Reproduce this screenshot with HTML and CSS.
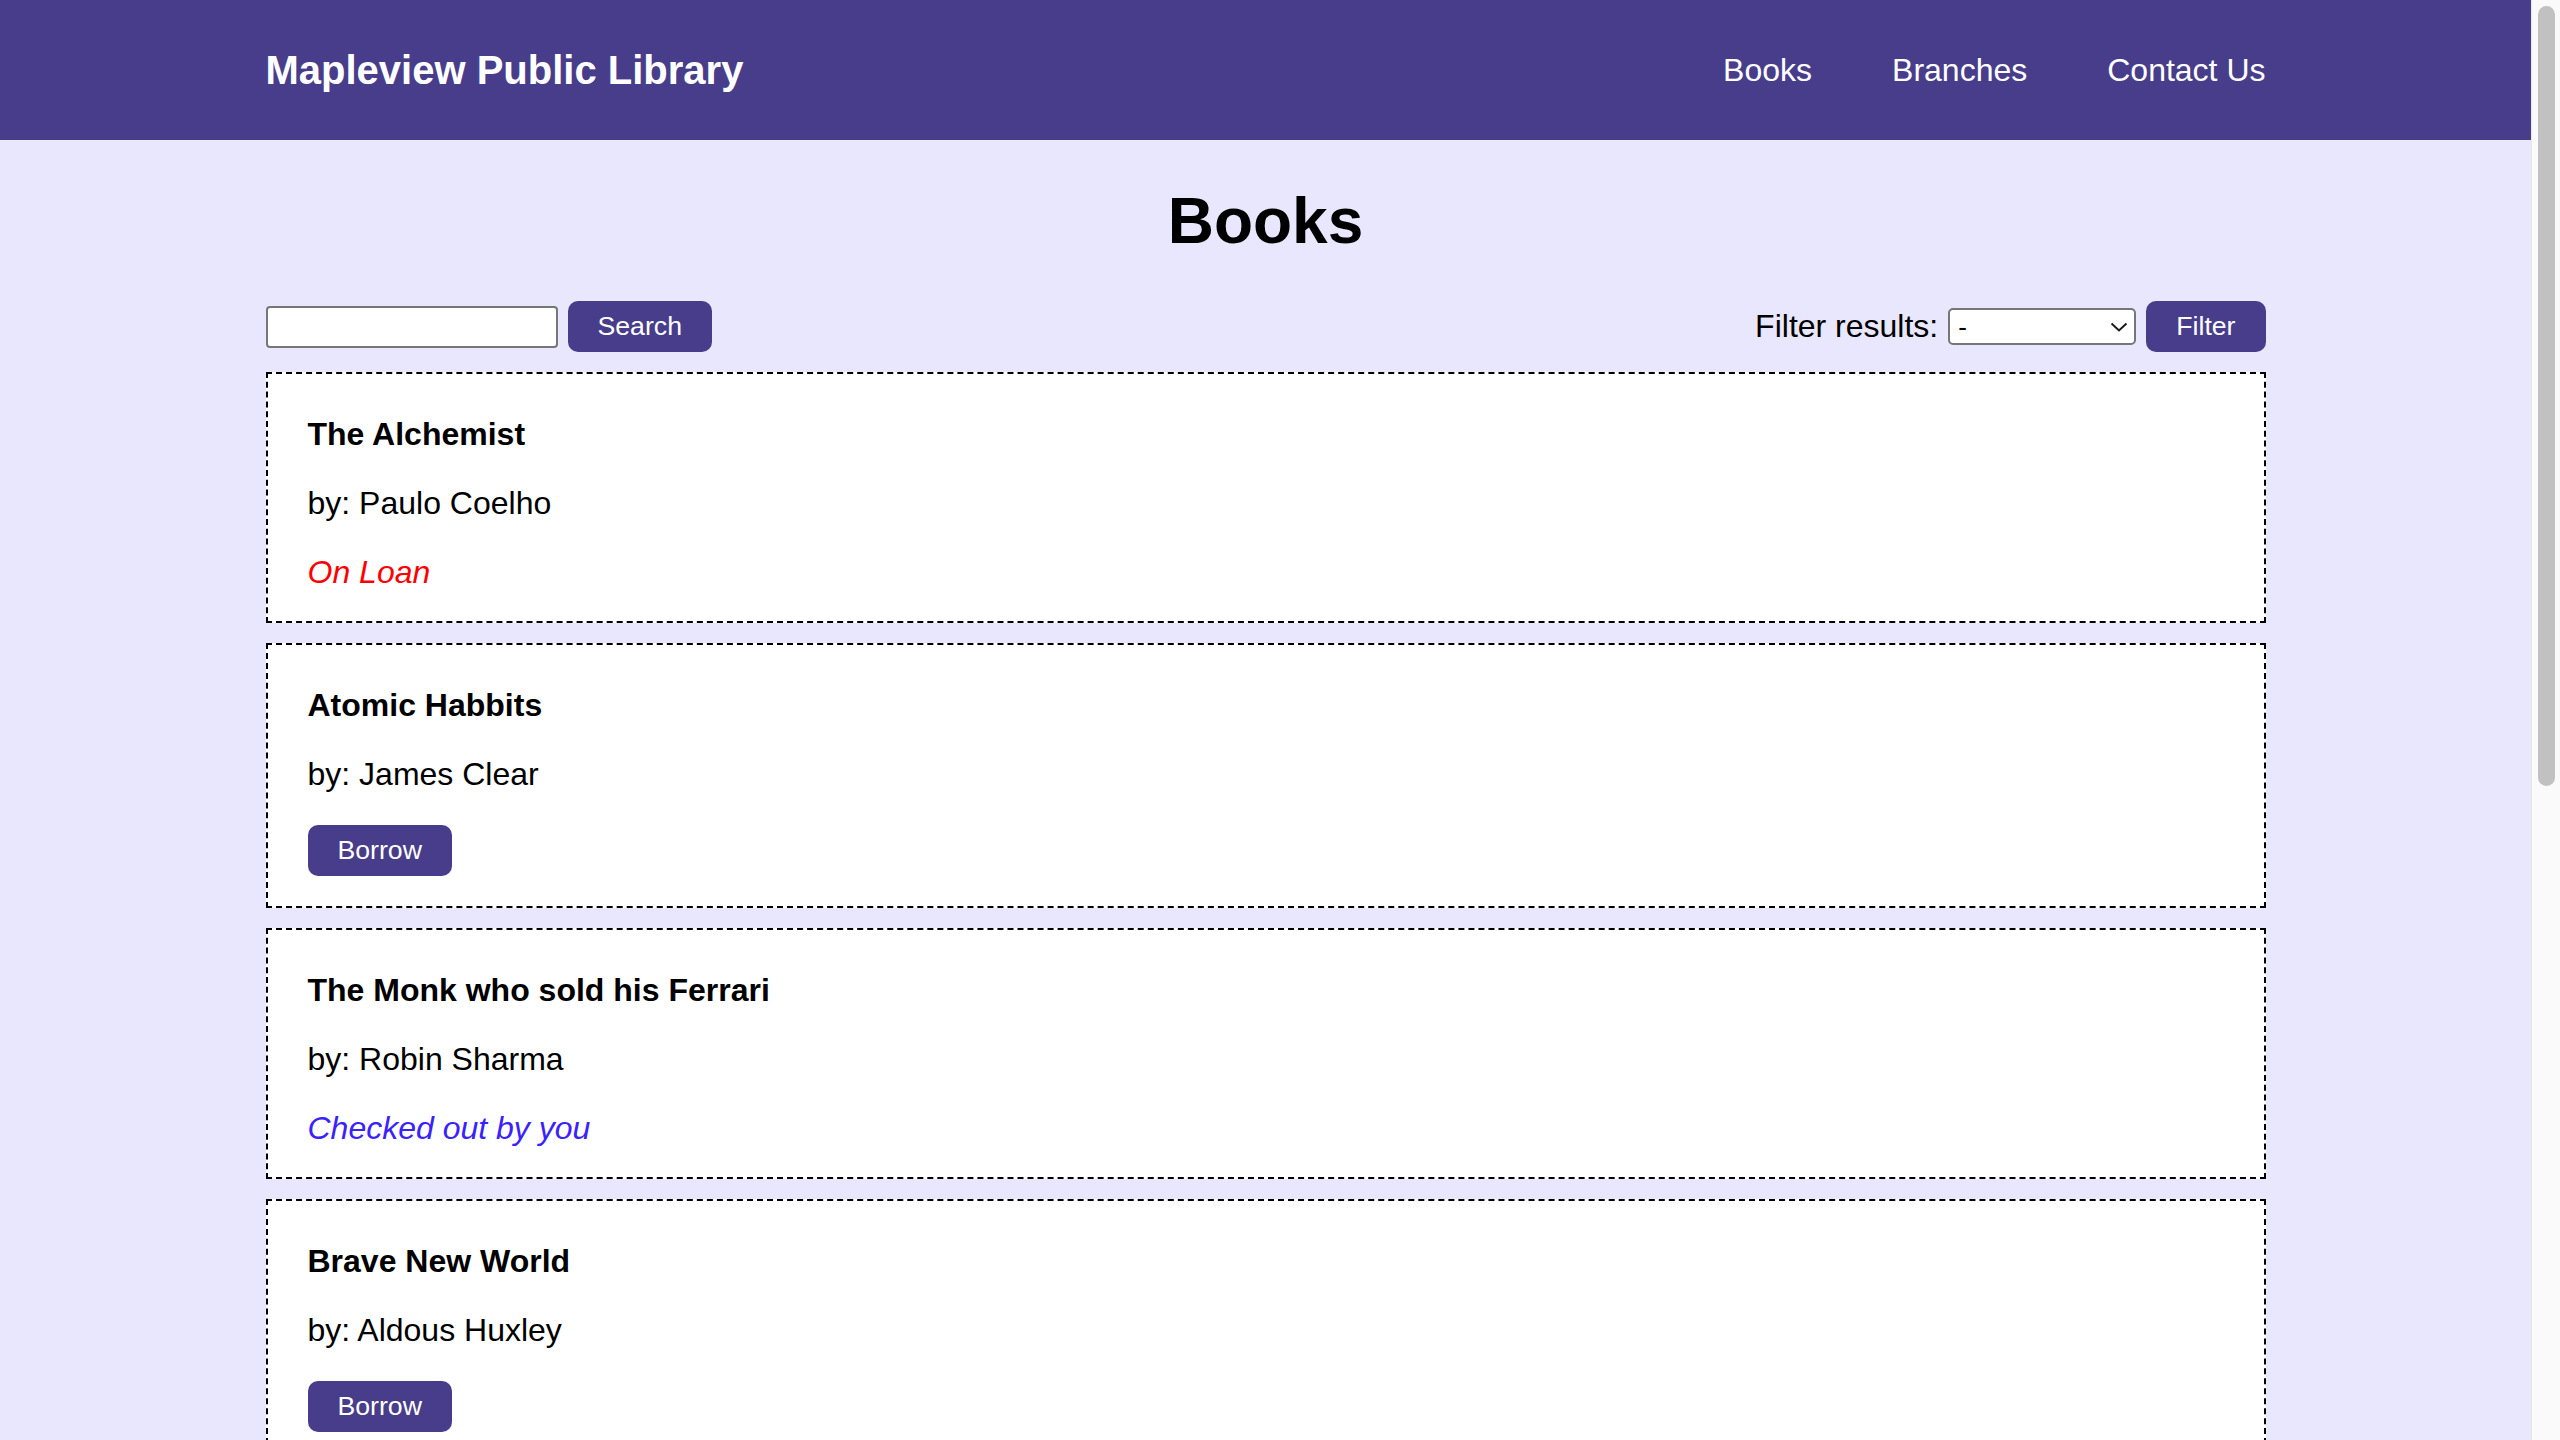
FILE: index.html
```html
<!DOCTYPE html>
<html lang="en">
<head>
<meta charset="utf-8">
<title>Mapleview Public Library – Books</title>
<link rel="stylesheet" href="styles.css">
</head>
<body>
<div class="page">
  <header class="site-header">
    <div class="header-inner">
      <div class="brand">Mapleview Public Library</div>
      <nav class="nav">
        <a href="#" class="nav-link">Books</a>
        <a href="#" class="nav-link">Branches</a>
        <a href="#" class="nav-link">Contact Us</a>
      </nav>
    </div>
  </header>
  <main class="main">
    <h1 class="page-title">Books</h1>
    <div class="toolbar">
      <form class="search-form">
        <input type="text" class="search-input" aria-label="Search">
        <button type="button" class="btn">Search</button>
      </form>
      <form class="filter-form">
        <label class="filter-label" for="filter">Filter results:</label>
        <span class="select-wrap">
          <select id="filter" class="filter-select">
            <option>-</option>
            <option>Available</option>
            <option>On Loan</option>
          </select>
          <svg class="chev" width="18" height="10" viewBox="0 0 18 10"><path d="M1.5 1.5 L9 8.5 L16.5 1.5" fill="none" stroke="#1a1a1a" stroke-width="2"/></svg>
        </span>
        <button type="button" class="btn">Filter</button>
      </form>
    </div>
    <div class="book-list">
      <div class="book">
        <h4 class="book-title">The Alchemist</h4>
        <p class="book-author">by: Paulo Coelho</p>
        <p class="status status-loan">On Loan</p>
      </div>
      <div class="book">
        <h4 class="book-title">Atomic Habbits</h4>
        <p class="book-author">by: James Clear</p>
        <div class="book-action"><button type="button" class="btn">Borrow</button></div>
      </div>
      <div class="book">
        <h4 class="book-title">The Monk who sold his Ferrari</h4>
        <p class="book-author">by: Robin Sharma</p>
        <p class="status status-mine">Checked out by you</p>
      </div>
      <div class="book">
        <h4 class="book-title">Brave New World</h4>
        <p class="book-author">by: Aldous Huxley</p>
        <div class="book-action"><button type="button" class="btn">Borrow</button></div>
      </div>
    </div>
  </main>
</div>
<div class="fake-scrollbar" aria-hidden="true"><div class="fake-thumb"></div></div>
</body>
</html>
```

FILE: styles.css
```css
html {
  background: #e8e7fd;
  scrollbar-width: none;
}
::-webkit-scrollbar {
  width: 0;
  height: 0;
}
body {
  margin: 0;
  background: #e8e7fd;
  font-family: "Liberation Sans", Arial, Helvetica, sans-serif;
  font-size: 32px;
  color: #000;
}
.page {
  margin-right: 29px;
}
.site-header {
  background: #483d8b;
  height: 140px;
  display: flex;
  align-items: center;
}
.header-inner {
  width: 2000px;
  margin: 0 auto;
  display: flex;
  align-items: center;
  justify-content: space-between;
}
.brand {
  color: #fff;
  font-weight: bold;
  font-size: 40px;
}
.nav {
  display: flex;
  gap: 80px;
}
.nav-link {
  color: #fff;
  text-decoration: none;
  font-size: 32px;
}
.main {
  width: 2000px;
  margin: 0 auto;
  padding-bottom: 40px;
}
.page-title {
  font-size: 64px;
  font-weight: bold;
  text-align: center;
  margin: 44px 0 43px;
}
.toolbar {
  display: flex;
  justify-content: space-between;
  align-items: center;
  margin-bottom: 20px;
}
.search-form,
.filter-form {
  display: flex;
  align-items: center;
  gap: 10px;
  margin: 0;
}
.search-input {
  box-sizing: border-box;
  width: 292px;
  height: 42px;
  border: 2px solid #767676;
  border-radius: 4px;
  background: #fff;
  padding: 2px 6px;
  font-family: "Liberation Sans", Arial, sans-serif;
  font-size: 26px;
}
.btn {
  background: #483d8b;
  color: #fff;
  border: none;
  border-radius: 10px;
  padding: 10px 30px;
  font-family: "Liberation Sans", Arial, sans-serif;
  font-size: 26.67px;
  line-height: 31px;
  cursor: pointer;
  display: block;
}
.filter-label {
  font-size: 32px;
}
.select-wrap {
  position: relative;
  display: block;
}
.filter-select {
  -webkit-appearance: none;
  appearance: none;
  box-sizing: border-box;
  width: 188px;
  height: 37px;
  border: 2px solid #767676;
  border-radius: 5px;
  background: #fff;
  padding: 0 0 0 8px;
  font-family: "Liberation Sans", Arial, sans-serif;
  font-size: 26px;
  color: #000;
  display: block;
}
.chev {
  position: absolute;
  right: 8px;
  top: 14px;
  pointer-events: none;
}
.book-list {
  display: flex;
  flex-direction: column;
  gap: 20px;
}
.book {
  background: #fff;
  border: 2px dashed #000;
  padding: 0 40px;
}
.book-title {
  font-size: 32px;
  font-weight: bold;
  margin: 42px 0 32px;
}
.book-author {
  margin: 32px 0;
}
.status {
  margin: 32px 0 30px;
  font-style: italic;
}
.status-loan {
  color: #ff0000;
}
.status-mine {
  color: #3a22ff;
}
.book-action {
  margin: 32px 0 30px;
}
.fake-scrollbar {
  position: fixed;
  top: 0;
  right: 0;
  width: 28px;
  height: 100vh;
  background: #fafafa;
  border-left: 1px solid #e6e6e6;
}
.fake-thumb {
  position: absolute;
  top: 6px;
  left: 6px;
  width: 17px;
  height: 780px;
  border-radius: 9px;
  background: #c1c1c1;
}
```
